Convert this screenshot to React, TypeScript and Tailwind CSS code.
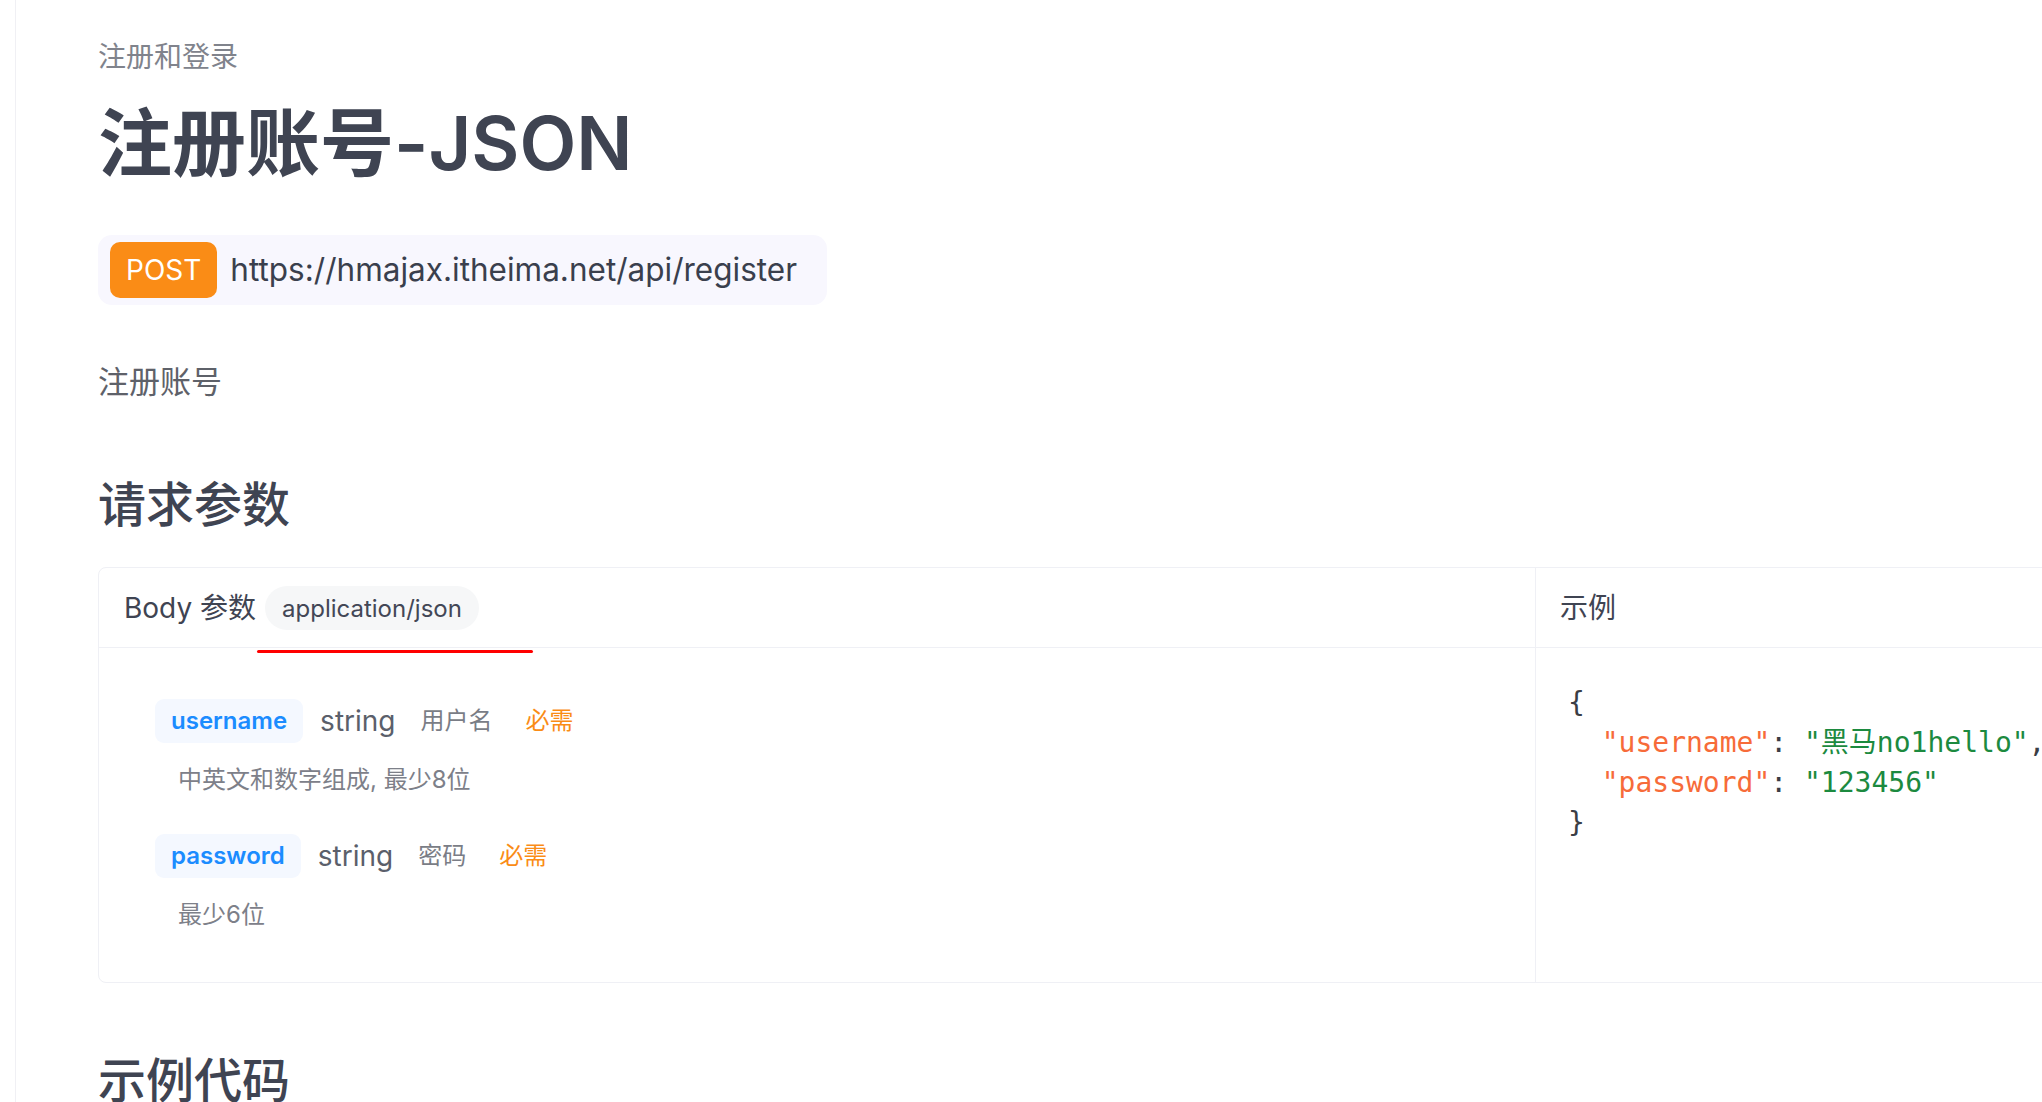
import React from "react";

type Param = {
  name: string;
  type: string;
  label: string;
  desc: string;
};

const params: Param[] = [
  { name: "username", type: "string", label: "用户名", desc: "中英文和数字组成, 最少8位" },
  { name: "password", type: "string", label: "密码", desc: "最少6位" },
];

function ParamItem({ p, first }: { p: Param; first?: boolean }) {
  return (
    <div className={first ? "" : "mt-[37px]"}>
      <div className="flex items-center h-[44px]">
        <span className="inline-flex items-center h-[44px] px-[16px] rounded-[9px] bg-[#f4f8ff] text-[#1b8cff] text-[24px] font-semibold">
          {p.name}
        </span>
        <span className="ml-[17px] text-[28px] text-[#5b5f6b]">{p.type}</span>
        <span className="ml-[25px] text-[24px] text-[#7a7d86]">{p.label}</span>
        <span className="ml-[33px] text-[24px] text-[#fa8c16]">必需</span>
      </div>
      <div className="mt-[20px] pl-[23px] text-[24px] leading-[34px] text-[#7d8089]">{p.desc}</div>
    </div>
  );
}

function JsonExample() {
  return (
    <pre className="font-['DejaVu_Sans_Mono','Noto_Sans_CJK_SC',monospace] text-[28px] leading-[40px] text-[#3a3d45]">
      {"{\n  "}
      <span className="text-[#f76b39]">"username"</span>
      {": "}
      <span className="text-[#1c8a3f]">"黑马no1hello"</span>
      {",\n  "}
      <span className="text-[#f76b39]">"password"</span>
      {": "}
      <span className="text-[#1c8a3f]">"123456"</span>
      {"\n}"}
    </pre>
  );
}

export default function App() {
  return (
    <div className="flex w-[2042px] h-[1102px] overflow-hidden bg-white font-[Inter,'Noto_Sans_CJK_SC',sans-serif]">
      <aside className="w-[16px] shrink-0 border-r border-[#f0f0f4]" />
      <main className="flex-1 pl-[82px] pt-[37px]">
        <div className="text-[28px] leading-[40px] text-[#80838c]">注册和登录</div>
        <h1 className="mt-[21px] text-[74px] leading-[90px] font-semibold text-[#3f4452]">注册账号-JSON</h1>

        <div className="mt-[47px] inline-flex items-center h-[70px] pl-[12px] pr-[30px] rounded-[14px] bg-[#f8f7fe]">
          <span className="inline-flex items-center h-[56px] px-[16px] rounded-[10px] bg-[#fa8c16] text-white text-[28px]">
            POST
          </span>
          <span className="ml-[13px] text-[31.5px] text-[#3a3f4d]">https://hmajax.itheima.net/api/register</span>
        </div>

        <p className="mt-[55px] text-[31px] leading-[44px] text-[#5e6169]">注册账号</p>

        <h2 className="mt-[69px] text-[48px] leading-[64px] font-medium text-[#3f4452]">请求参数</h2>

        <div className="relative mt-[30px] w-[2200px] border border-[#eff0f5] rounded-[8px] grid grid-cols-[1437px_1fr]">
          <div className="h-[80px] flex items-center pl-[25px] border-b border-r border-[#eff0f5]">
            <span className="text-[28px] text-[#3f4452]">Body 参数</span>
            <span className="ml-[9px] inline-flex items-center h-[44px] pt-[2px] px-[17px] rounded-full bg-[#f6f7f8] text-[24px] text-[#434756]">
              application/json
            </span>
          </div>
          <div className="h-[80px] flex items-center pl-[24px] border-b border-[#eff0f5]">
            <span className="text-[28px] text-[#3f4452]">示例</span>
          </div>

          <div className="pt-[51px] pb-[50px] pl-[56px] border-r border-[#eff0f5]">
            {params.map((p, i) => (
              <ParamItem key={p.name} p={p} first={i === 0} />
            ))}
          </div>
          <div className="pt-[35px] pl-[32px]">
            <JsonExample />
          </div>

          <div className="absolute left-[158px] top-[82px] w-[276px] h-[3px] rounded-full bg-[#ff0000]" />
        </div>

        <h2 className="mt-[66px] text-[48px] leading-[64px] font-medium text-[#3f4452]">示例代码</h2>
      </main>
    </div>
  );
}
